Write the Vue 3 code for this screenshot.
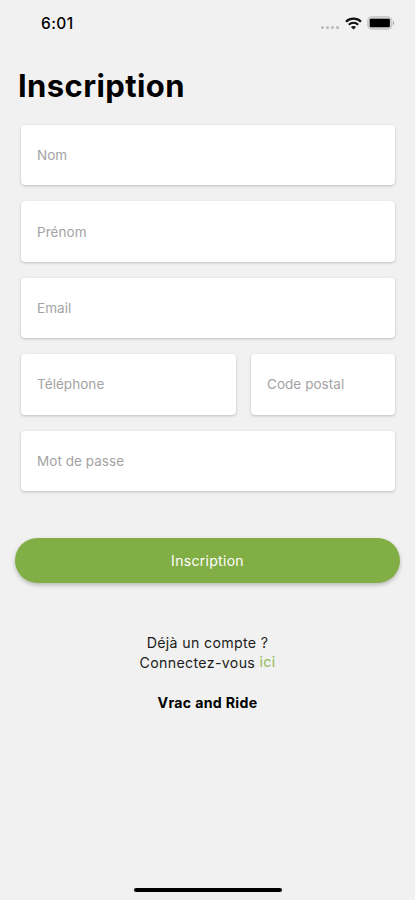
<template>
  <div class="screen">
    <header class="status-bar">
      <span class="time">6:01</span>
      <div class="status-icons">
        <span class="dots"><i v-for="n in 4" :key="n"></i></span>
        <svg class="wifi" viewBox="0 0 17 13" width="17" height="13" fill="none" stroke="#111">
          <path d="M1 4.7C5.2.7 11.8.7 16 4.7" stroke-width="2.2" />
          <path d="M3.8 7.7c2.6-2.5 6.8-2.5 9.4 0" stroke-width="2" />
          <path d="M8.5 12.6 5.9 10c1.4-1.3 3.8-1.3 5.2 0z" fill="#111" stroke="none" />
        </svg>
        <svg class="battery" viewBox="0 0 28 14" width="28" height="14">
          <rect x=".7" y=".7" width="24.2" height="12.6" rx="3.8" fill="#d2d2d2" stroke="#c6c6c6" stroke-width="1" />
          <rect x="2.7" y="2.8" width="20.2" height="8.4" rx="1.2" fill="#000" />
          <path d="M26 4.8c1.7.7 1.7 3.7 0 4.4z" fill="#a9a9a9" />
        </svg>
      </div>
    </header>

    <h1 class="title">Inscription</h1>

    <form class="form" @submit.prevent>
      <div class="fields">
        <input
          v-for="field in fields"
          :key="field.name"
          v-model="form[field.name]"
          :type="field.type"
          :placeholder="field.label"
          class="field"
          :class="field.name"
        />
      </div>
      <button class="submit" type="submit">Inscription</button>
    </form>

    <div class="login">
      <p class="question">Déjà un compte ?</p>
      <p class="connect">Connectez-vous <a class="link">ici</a></p>
    </div>
    <p class="brand">Vrac and Ride</p>

    <div class="home-indicator"></div>
  </div>
</template>

<script setup>
import { reactive } from "vue";

const fields = [
  { name: "nom", label: "Nom", type: "text" },
  { name: "prenom", label: "Prénom", type: "text" },
  { name: "email", label: "Email", type: "email" },
  { name: "telephone", label: "Téléphone", type: "tel" },
  { name: "postal", label: "Code postal", type: "text" },
  { name: "password", label: "Mot de passe", type: "password" },
];

const form = reactive({
  nom: "",
  prenom: "",
  email: "",
  telephone: "",
  postal: "",
  password: "",
});
</script>

<style>
body {
  margin: 0;
  background: #f1f1f1;
}
</style>

<style scoped>
.screen {
  display: flex;
  flex-direction: column;
  box-sizing: border-box;
  width: 100%;
  height: 900px;
  padding-bottom: 8px;
  overflow: hidden;
  background: #f1f1f1;
  color: #000;
  font-family: Inter, "Liberation Sans", sans-serif;
}
.status-bar {
  display: flex;
  align-items: center;
  justify-content: space-between;
  height: 46px;
  padding: 0 20px 0 41px;
}
.time {
  font-size: 15.5px;
  font-weight: 500;
  letter-spacing: .4px;
}
.status-icons {
  display: flex;
  align-items: center;
}
.dots {
  display: flex;
  gap: 2px;
  margin: 8px 6px 0 0;
}
.dots i {
  width: 3px;
  height: 3px;
  border-radius: 50%;
  background: #b9b9b9;
}
.wifi {
  margin-right: 5px;
}
.title {
  margin: 20px 0 0 18px;
  font-size: 31px;
  line-height: 40px;
  font-weight: 700;
  letter-spacing: .4px;
}
.form {
  margin-top: 19px;
}
.fields {
  display: grid;
  grid-template-columns: 215px 143.5px;
  grid-auto-rows: 60.4px;
  gap: 16px 15px;
  margin: 0 20px 0 21px;
}
.field {
  grid-column: 1 / -1;
  box-sizing: border-box;
  width: 100%;
  padding: 0 16px;
  border: 0;
  border-radius: 4px;
  background: #fff;
  box-shadow: 0 1px 3px rgba(0, 0, 0, .22);
  font-family: inherit;
  font-size: 13.5px;
  letter-spacing: .05px;
  outline: none;
}
.field::placeholder {
  color: #a3a3a3;
  opacity: 1;
}
.field.telephone,
.field.postal {
  grid-column: auto;
}
.submit {
  display: block;
  width: 385px;
  height: 45px;
  margin: 47px auto 0;
  padding: 1px 0 0;
  border: 0;
  border-radius: 23px;
  background: #82ae46;
  box-shadow: 0 2px 4px rgba(0, 0, 0, .24);
  color: #fff;
  font-family: inherit;
  font-size: 14px;
  letter-spacing: .3px;
}
.login {
  margin-top: 50px;
  text-align: center;
  font-size: 14.2px;
  line-height: 20px;
  letter-spacing: .33px;
  color: #1c1c1c;
}
.login p {
  margin: 0;
}
.link {
  position: relative;
  top: -1px;
  color: #91b85c;
}
.brand {
  margin: 20px 0 0;
  text-align: center;
  font-size: 14.2px;
  line-height: 20px;
  font-weight: 700;
  letter-spacing: .3px;
}
.home-indicator {
  width: 148px;
  height: 4.5px;
  margin: auto auto 0;
  border-radius: 3px;
  background: #000;
}
</style>
